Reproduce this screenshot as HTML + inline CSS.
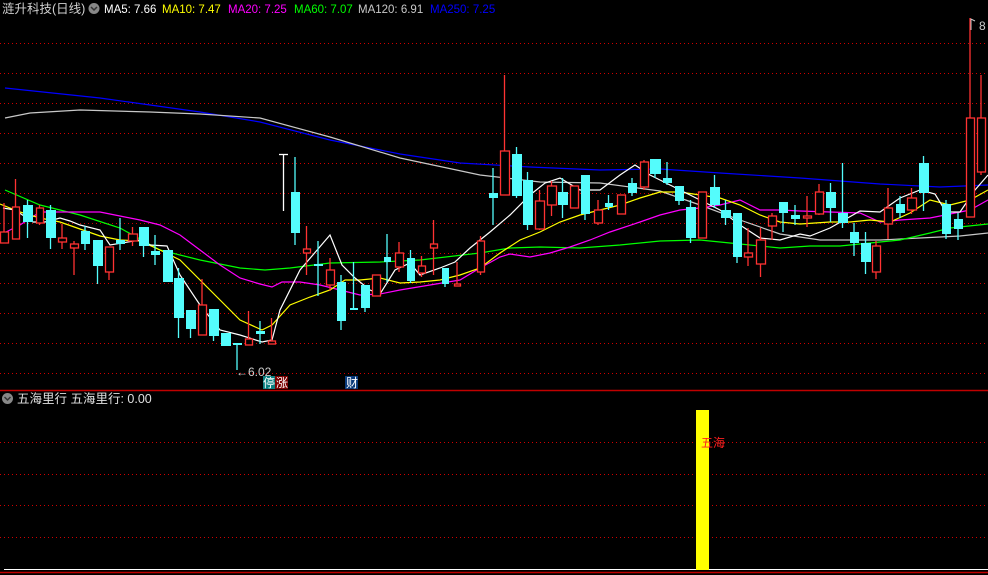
<!DOCTYPE html>
<html><head><meta charset="utf-8"><style>
body{margin:0;background:#000;width:988px;height:575px;overflow:hidden;font-family:"Liberation Sans","Noto Sans CJK SC",sans-serif;}
svg{position:absolute;left:0;top:0}
</style></head><body>
<svg width="988" height="575" xmlns="http://www.w3.org/2000/svg" font-family="Liberation Sans, Noto Sans CJK SC, sans-serif">
<g stroke="#d00000" stroke-width="1" stroke-dasharray="1,3" shape-rendering="crispEdges">
<line x1="0" y1="43.5" x2="988" y2="43.5"/><line x1="0" y1="73.5" x2="988" y2="73.5"/><line x1="0" y1="103.5" x2="988" y2="103.5"/><line x1="0" y1="133.5" x2="988" y2="133.5"/><line x1="0" y1="163.5" x2="988" y2="163.5"/><line x1="0" y1="193.5" x2="988" y2="193.5"/><line x1="0" y1="223.5" x2="988" y2="223.5"/><line x1="0" y1="253.5" x2="988" y2="253.5"/><line x1="0" y1="283.5" x2="988" y2="283.5"/><line x1="0" y1="313.5" x2="988" y2="313.5"/><line x1="0" y1="343.5" x2="988" y2="343.5"/><line x1="0" y1="373.5" x2="988" y2="373.5"/>
<line x1="0" y1="442.5" x2="988" y2="442.5"/><line x1="0" y1="474.5" x2="988" y2="474.5"/><line x1="0" y1="505.5" x2="988" y2="505.5"/><line x1="0" y1="537.5" x2="988" y2="537.5"/>
</g>
<line x1="0" y1="390.5" x2="988" y2="390.5" stroke="#c00000" stroke-width="1.5"/>
<line x1="4" y1="569.5" x2="988" y2="569.5" stroke="#fff"/>
<line x1="0" y1="572.5" x2="988" y2="572.5" stroke="#c00000" stroke-width="1.5"/>
<rect x="696" y="410" width="13" height="160" fill="#ffff00"/>
<text x="701" y="447" font-size="12" fill="#ff2020">五海</text>

<g fill="none" stroke-width="1.2">
<polyline stroke="#0000ff" points="5,88 100,98 200,112 260,122 330,140 400,154 460,163 530,167 600,170 660,169 720,173 800,178 880,184 940,187 988,185"/>
<polyline stroke="#c8c8c8" points="5,118 30,113 80,110 150,112 200,114 260,118 330,137 400,158 480,175 540,182 600,183 660,191 700,205 740,220 780,234 820,240 880,240 920,238 960,236 988,233"/>
<polyline stroke="#00ff00" points="5,190 40,205 80,215 120,228 160,250 200,260 240,268 265,270 290,268 330,263 380,262 420,260 480,253 510,248 540,247 580,248 620,245 660,241 700,240 740,244 780,248 810,246 840,246 870,243 900,240 930,233 950,228 988,224"/>
<polyline stroke="#ff00ff" points="0,235 20,225 40,212 60,212 100,212 120,216 140,220 160,225 180,235 200,250 220,265 240,278 260,284 272,287 282,282 300,282 320,285 340,290 360,295 380,294 400,290 430,285 460,280 480,268 500,257 510,254 530,257 550,253 570,247 590,240 610,232 640,222 660,215 680,210 700,208 720,205 740,200 760,210 780,210 800,211 830,212 860,213 880,222 900,220 930,218 950,214 970,210 988,200"/>
<polyline stroke="#ffff00" points="0,204 20,212 40,218 60,222 80,229 100,236 120,240 140,241 160,250 180,260 200,280 220,300 240,320 262,330 272,325 290,305 310,297 330,290 345,280 360,280 380,278 400,283 420,282 440,280 460,275 480,268 500,253 520,240 540,232 560,222 580,215 600,210 620,205 640,198 660,192 680,192 700,195 720,198 740,205 760,215 780,222 800,224 830,222 850,222 870,220 890,222 910,213 930,200 950,205 970,200 988,190"/>
<polyline stroke="#ffffff" points="3,208 15,210 33,222 45,222 60,218 70,221 80,225 100,230 110,245 140,240 150,245 167,246 180,275 200,305 220,330 240,335 262,342 272,340 280,310 300,270 330,235 342,265 355,278 370,290 380,294 395,270 410,263 420,275 440,268 455,262 470,248 490,232 510,215 530,195 545,183 560,178 580,190 600,190 620,175 635,165 650,175 660,180 680,190 700,200 720,210 740,225 760,238 780,240 800,234 810,236 830,228 860,211 880,212 890,205 900,198 920,190 935,194 946,212 960,212 975,190 988,175"/>
</g>
<g stroke="#54fcfc" stroke-width="1.3">
<line x1="27.5" y1="200" x2="27.5" y2="238"/><line x1="50.5" y1="205" x2="50.5" y2="249"/><line x1="85" y1="226" x2="85" y2="250"/><line x1="97.5" y1="240" x2="97.5" y2="284"/><line x1="120" y1="218" x2="120" y2="250"/><line x1="143.5" y1="227" x2="143.5" y2="257"/><line x1="155" y1="235" x2="155" y2="265"/><line x1="178.5" y1="268" x2="178.5" y2="338"/><line x1="190.5" y1="310" x2="190.5" y2="338"/><line x1="213.5" y1="309" x2="213.5" y2="341"/><line x1="237" y1="343" x2="237" y2="370"/><line x1="260" y1="321" x2="260" y2="344"/><line x1="295" y1="157" x2="295" y2="245"/><line x1="318" y1="241" x2="318" y2="296"/><line x1="341" y1="275" x2="341" y2="330"/><line x1="353.5" y1="262" x2="353.5" y2="310"/><line x1="365" y1="285" x2="365" y2="312"/><line x1="387" y1="234" x2="387" y2="282"/><line x1="410.5" y1="250" x2="410.5" y2="283"/><line x1="445" y1="268" x2="445" y2="287"/><line x1="493" y1="168" x2="493" y2="225"/><line x1="516.5" y1="147" x2="516.5" y2="198"/><line x1="527.5" y1="172" x2="527.5" y2="230"/><line x1="562.5" y1="178" x2="562.5" y2="218"/><line x1="585" y1="175" x2="585" y2="220"/><line x1="608.5" y1="195" x2="608.5" y2="210"/><line x1="632" y1="178" x2="632" y2="196"/><line x1="655" y1="159" x2="655" y2="178"/><line x1="667" y1="162" x2="667" y2="185"/><line x1="679" y1="186" x2="679" y2="205"/><line x1="690.5" y1="200" x2="690.5" y2="243"/><line x1="714.5" y1="175" x2="714.5" y2="208"/><line x1="725.5" y1="200" x2="725.5" y2="225"/><line x1="737" y1="213" x2="737" y2="263"/><line x1="783" y1="203" x2="783" y2="232"/><line x1="795" y1="205" x2="795" y2="225"/><line x1="830.5" y1="183" x2="830.5" y2="222"/><line x1="842.5" y1="163" x2="842.5" y2="228"/><line x1="854" y1="223" x2="854" y2="256"/><line x1="865.5" y1="232" x2="865.5" y2="274"/><line x1="900" y1="196" x2="900" y2="218"/><line x1="923.5" y1="156" x2="923.5" y2="211"/><line x1="946" y1="200" x2="946" y2="239"/><line x1="958" y1="213" x2="958" y2="240"/>
</g>
<g fill="#54fcfc">
<rect x="23" y="205" width="10" height="17"/><rect x="46" y="210" width="10" height="28"/><rect x="81" y="231" width="9" height="13"/><rect x="93" y="240" width="10" height="26"/><rect x="116" y="240" width="9" height="4"/><rect x="139" y="227" width="10" height="19"/><rect x="151" y="251" width="9" height="4"/><rect x="163" y="250" width="10" height="32"/><rect x="174" y="278" width="10" height="40"/><rect x="186" y="310" width="10" height="19"/><rect x="209" y="309" width="10" height="27"/><rect x="221" y="333" width="10" height="13"/><rect x="233" y="343" width="9" height="2"/><rect x="256" y="331" width="9" height="3"/><rect x="291" y="192" width="9" height="41"/><rect x="314" y="264" width="9" height="2"/><rect x="337" y="282" width="9" height="39"/><rect x="350" y="308" width="8" height="2"/><rect x="361" y="285" width="9" height="23"/><rect x="384" y="257" width="7" height="5"/><rect x="407" y="258" width="8" height="23"/><rect x="442" y="268" width="7" height="16"/><rect x="489" y="193" width="9" height="5"/><rect x="512" y="154" width="10" height="42"/><rect x="523" y="180" width="10" height="45"/><rect x="558" y="192" width="10" height="13"/><rect x="581" y="175" width="9" height="39"/><rect x="605" y="203" width="8" height="4"/><rect x="628" y="183" width="9" height="10"/><rect x="650" y="159" width="11" height="15"/><rect x="663" y="178" width="9" height="5"/><rect x="675" y="186" width="9" height="15"/><rect x="686" y="207" width="10" height="31"/><rect x="710" y="187" width="10" height="18"/><rect x="721" y="210" width="10" height="8"/><rect x="733" y="213" width="9" height="44"/><rect x="779" y="202" width="9" height="11"/><rect x="791" y="215" width="9" height="4"/><rect x="826" y="192" width="10" height="16"/><rect x="838" y="213" width="10" height="10"/><rect x="850" y="232" width="9" height="11"/><rect x="861" y="243" width="10" height="19"/><rect x="896" y="204" width="9" height="9"/><rect x="919" y="163" width="10" height="30"/><rect x="942" y="204" width="9" height="30"/><rect x="954" y="219" width="9" height="10"/>
</g>
<g stroke="#ff3232" stroke-width="1.3">
<line x1="4" y1="203" x2="4" y2="232"/><line x1="15.5" y1="179" x2="15.5" y2="207"/><line x1="39.5" y1="205" x2="39.5" y2="225"/><line x1="62" y1="224" x2="62" y2="249"/><line x1="74" y1="241" x2="74" y2="275"/><line x1="109" y1="272" x2="109" y2="280"/><line x1="132.5" y1="227" x2="132.5" y2="246"/><line x1="202" y1="279" x2="202" y2="305"/><line x1="248.5" y1="311" x2="248.5" y2="339"/><line x1="271.5" y1="318" x2="271.5" y2="341"/><line x1="306.5" y1="226" x2="306.5" y2="275"/><line x1="330" y1="258" x2="330" y2="291"/><line x1="399" y1="242" x2="399" y2="272"/><line x1="421.5" y1="256" x2="421.5" y2="277"/><line x1="433.5" y1="220" x2="433.5" y2="275"/><line x1="457" y1="262" x2="457" y2="286"/><line x1="480.5" y1="236" x2="480.5" y2="275"/><line x1="504.5" y1="75" x2="504.5" y2="151"/><line x1="539.5" y1="190" x2="539.5" y2="230"/><line x1="551.5" y1="181" x2="551.5" y2="216"/><line x1="598" y1="200" x2="598" y2="225"/><line x1="644" y1="160" x2="644" y2="190"/><line x1="748" y1="228" x2="748" y2="266"/><line x1="760.5" y1="228" x2="760.5" y2="277"/><line x1="772" y1="213" x2="772" y2="240"/><line x1="807" y1="196" x2="807" y2="227"/><line x1="819" y1="184" x2="819" y2="215"/><line x1="876" y1="241" x2="876" y2="279"/><line x1="888" y1="188" x2="888" y2="239"/><line x1="911.5" y1="188" x2="911.5" y2="214"/><line x1="970" y1="18" x2="970" y2="118"/><line x1="981" y1="75" x2="981" y2="118"/><line x1="981" y1="172" x2="981" y2="175"/>
</g>
<g stroke="#ff3232" stroke-width="1.3" fill="#000">
<rect x="0.5" y="232" width="8" height="11"/><rect x="12.5" y="207" width="7" height="32"/><rect x="36.5" y="208" width="7" height="15"/><rect x="58.5" y="238" width="8" height="4"/><rect x="70.5" y="244" width="8" height="4"/><rect x="105.5" y="247" width="8" height="25"/><rect x="128.5" y="234" width="9" height="7"/><rect x="198.5" y="305" width="8" height="30"/><rect x="245.5" y="339" width="7" height="6"/><rect x="268.5" y="341" width="7" height="3"/><rect x="303.5" y="249" width="7" height="4"/><rect x="326.5" y="270" width="8" height="15"/><rect x="372.5" y="275" width="8" height="21"/><rect x="395.5" y="253" width="8" height="14"/><rect x="418.5" y="266" width="7" height="7"/><rect x="430.5" y="244" width="7" height="4"/><rect x="454.5" y="284" width="6" height="2"/><rect x="477.5" y="241" width="7" height="31"/><rect x="500.5" y="151" width="9" height="44"/><rect x="535.5" y="201" width="9" height="28"/><rect x="547.5" y="186" width="9" height="19"/><rect x="570.5" y="186" width="8" height="22"/><rect x="594.5" y="210" width="8" height="13"/><rect x="617.5" y="195" width="8" height="19"/><rect x="640.5" y="162" width="8" height="25"/><rect x="698.5" y="192" width="8" height="46"/><rect x="744.5" y="253" width="8" height="4"/><rect x="756.5" y="240" width="9" height="24"/><rect x="768.5" y="216" width="8" height="10"/><rect x="803.5" y="216" width="8" height="2"/><rect x="815.5" y="192" width="8" height="22"/><rect x="872.5" y="246" width="8" height="26"/><rect x="884.5" y="208" width="8" height="16"/><rect x="907.5" y="198" width="9" height="12"/><rect x="966.5" y="118" width="8" height="99"/><rect x="977.5" y="118" width="8" height="54"/>
</g>
<line x1="283.5" y1="154" x2="283.5" y2="211" stroke="#fff" stroke-width="1.3"/>
<line x1="279" y1="154.5" x2="288" y2="154.5" stroke="#fff" stroke-width="1.3"/>
<polyline points="975,21 971,19 971,30" fill="none" stroke="#ccc"/>
<text x="979" y="30" font-size="12" fill="#ccc">8</text>
<text x="236" y="376" font-size="12" fill="#ccc">←6.02</text>
<rect x="263" y="376" width="12" height="13" fill="#0a7f80"/><text x="263" y="387" font-size="12" fill="#fff">停</text>
<rect x="275" y="376" width="13" height="13" fill="#7a0000"/><text x="276" y="387" font-size="12" fill="#fff">涨</text>
<rect x="345" y="376" width="13" height="13" fill="#0a3a7a"/><text x="346" y="387" font-size="12" fill="#fff">财</text>
<text x="2" y="13" font-size="12.5" fill="#d0d0d0">涟升科技(日线)</text>
<circle cx="94" cy="8.5" r="5.5" fill="#888"/><path d="M91,7 L94,10 L97,7" stroke="#333" fill="none" stroke-width="1.5"/>
<text y="13" font-size="11.5"><tspan x="104" fill="#fff">MA5: 7.66</tspan><tspan x="162" fill="#ffff00">MA10: 7.47</tspan><tspan x="228" fill="#ff00ff">MA20: 7.25</tspan><tspan x="294" fill="#00ff00">MA60: 7.07</tspan><tspan x="358" fill="#c8c8c8">MA120: 6.91</tspan><tspan x="430" fill="#0000ff">MA250: 7.25</tspan></text>
<circle cx="7.5" cy="398.5" r="5.5" fill="#888"/><path d="M4.5,397 L7.5,400 L10.5,397" stroke="#333" fill="none" stroke-width="1.5"/>
<text x="17" y="403" font-size="12.5" fill="#e0e0e0">五海里行 五海里行: 0.00</text>
</svg>
</body></html>
